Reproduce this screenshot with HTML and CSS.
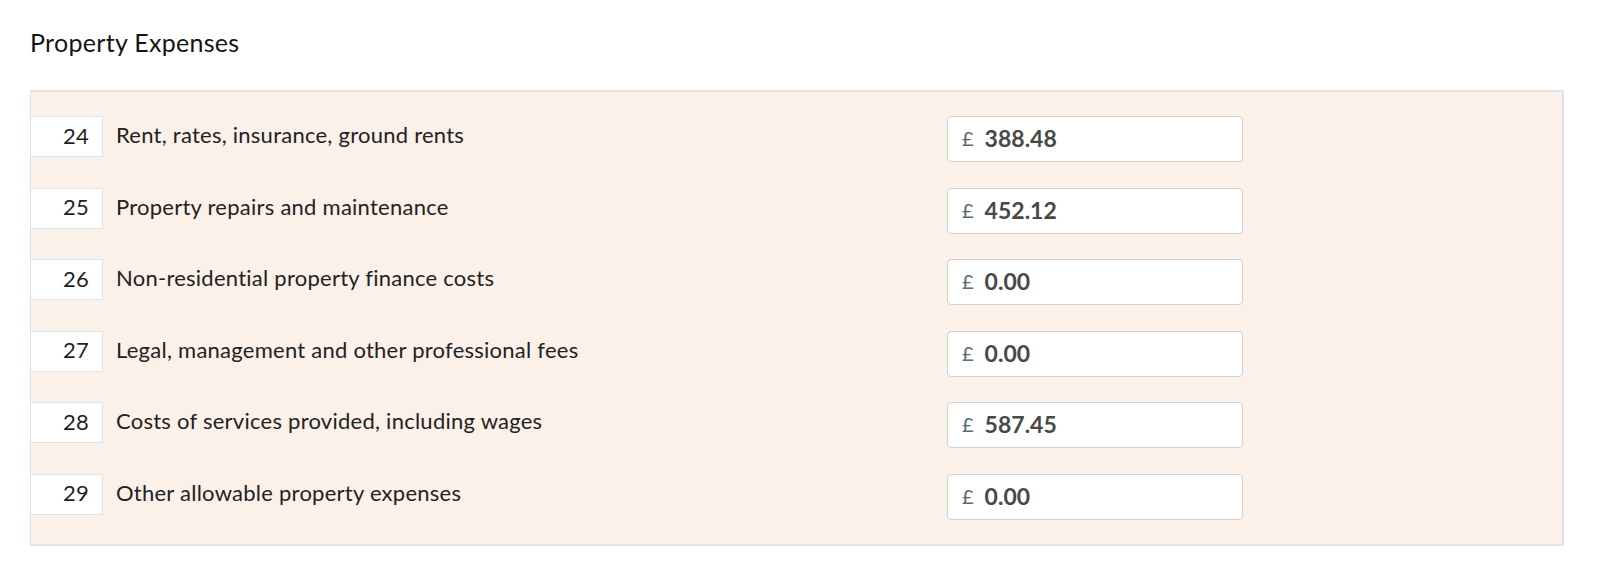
FILE: index.html
```html
<!DOCTYPE html>
<html lang="en">
<head>
<meta charset="utf-8">
<title>Property Expenses</title>
<link rel="stylesheet" href="styles.css">
</head>
<body>
<div class="page">
  <h2 class="title">Property Expenses</h2>
  <div class="panel">
    <div class="row">
      <div class="num">24</div>
      <div class="label">Rent, rates, insurance, ground rents</div>
      <div class="field"><span class="cur">£</span><span class="val">388.48</span></div>
    </div>
    <div class="row">
      <div class="num">25</div>
      <div class="label">Property repairs and maintenance</div>
      <div class="field"><span class="cur">£</span><span class="val">452.12</span></div>
    </div>
    <div class="row">
      <div class="num">26</div>
      <div class="label">Non-residential property finance costs</div>
      <div class="field"><span class="cur">£</span><span class="val">0.00</span></div>
    </div>
    <div class="row">
      <div class="num">27</div>
      <div class="label">Legal, management and other professional fees</div>
      <div class="field"><span class="cur">£</span><span class="val">0.00</span></div>
    </div>
    <div class="row">
      <div class="num">28</div>
      <div class="label">Costs of services provided, including wages</div>
      <div class="field"><span class="cur">£</span><span class="val">587.45</span></div>
    </div>
    <div class="row">
      <div class="num">29</div>
      <div class="label">Other allowable property expenses</div>
      <div class="field"><span class="cur">£</span><span class="val">0.00</span></div>
    </div>
  </div>
</div>
</body>
</html>
```
FILE: styles.css
```css
* { box-sizing: border-box; }
html, body { margin: 0; padding: 0; background: #ffffff; }
body {
  font-family: Lato, "Noto Sans", "Liberation Sans", sans-serif;
  color: #1f1f1f;
}
.page {
  padding: 28px 36px 0 30px;
}
.title {
  margin: 0 0 34px 0;
  font-size: 25px;
  line-height: 28px;
  font-weight: 400;
  letter-spacing: 0.3px;
  color: #141414;
}
.panel {
  background: #fcf1e8;
  border: 2px solid #e4e3e1;
  border-left-width: 1px;
  padding: 24px 0;
  display: flex;
  flex-direction: column;
  gap: 25.6px;
}
.row {
  display: grid;
  grid-template-columns: 72px 844px 296px;
  align-items: start;
  height: 46px;
}
.num {
  margin-left: -1px;
  height: 41px;
  background: #ffffff;
  border: 1px solid #dde3ea;
  display: flex;
  align-items: center;
  justify-content: flex-end;
  padding-right: 13px;
  padding-bottom: 3px;
  font-size: 22px;
  letter-spacing: 0.2px;
  color: #1f1f1f;
}
.label {
  padding-left: 13px;
  line-height: 38px;
  font-size: 22px;
  letter-spacing: 0.25px;
  color: #222222;
}
.field {
  height: 46px;
  background: #ffffff;
  border: 1px solid #d0d0d0;
  border-radius: 4px;
  display: flex;
  align-items: center;
  padding-left: 14px;
  padding-bottom: 2px;
  gap: 11px;
}
.cur {
  font-size: 20px;
  color: #5a6b78;
}
.val {
  font-size: 23px;
  font-weight: 700;
  color: #484848;
}
```
